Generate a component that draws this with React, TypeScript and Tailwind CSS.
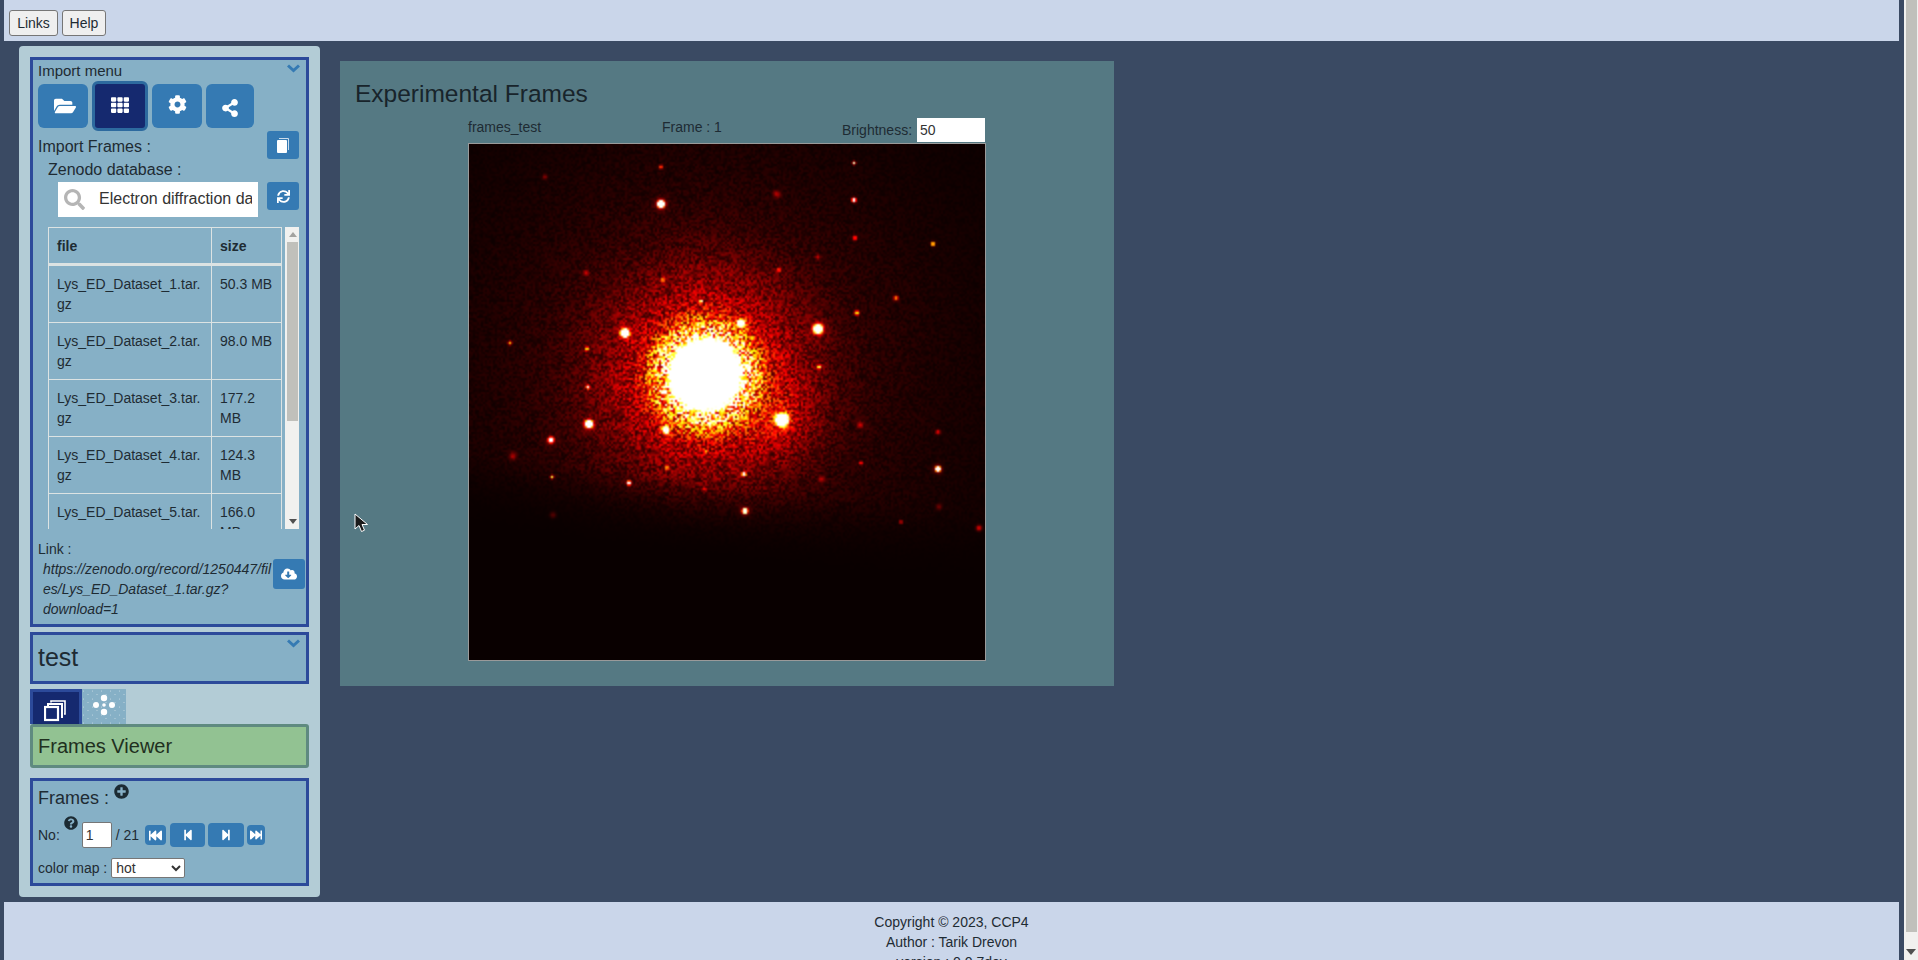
import React, { useEffect, useRef } from "react";
import {
  FaCog,
  FaCloudDownloadAlt,
  FaFastBackward,
  FaFastForward,
  FaFolderOpen,
  FaPlusCircle,
  FaQuestionCircle,
  FaSearch,
  FaShareAlt,
  FaStepBackward,
  FaStepForward,
  FaSync,
  FaTh,
} from "react-icons/fa";

const files = [
  ["Lys_ED_Dataset_1.tar.gz", "50.3 MB"],
  ["Lys_ED_Dataset_2.tar.gz", "98.0 MB"],
  ["Lys_ED_Dataset_3.tar.gz", "177.2 MB"],
  ["Lys_ED_Dataset_4.tar.gz", "124.3 MB"],
  ["Lys_ED_Dataset_5.tar.gz", "166.0 MB"],
];

// x, y, sigma, amplitude (in displayed pixels of the 516 frame)
const spots = [
  [192, 23, 1.2, 0.5], [76, 33, 1.6, 0.16], [385, 19, 1, 0.9], [385, 56, 1.3, 1.4], [192, 60, 2, 3],
  [308, 50, 2.4, 0.2], [386, 94, 1.4, 0.5], [464, 100, 1.2, 1], [349, 113, 1.6, 0.2], [310, 126, 1.6, 0.35],
  [117, 129, 2, 0.2], [194, 136, 1.6, 0.45], [232, 157, 1, 0.9], [427, 154, 1.5, 0.55], [388, 169, 1.5, 0.7],
  [272, 179, 2, 2.2], [349, 185, 2.5, 3.2], [156, 189, 2.3, 3.2], [41, 199, 1.2, 0.55], [118, 205, 1.2, 0.8],
  [350, 223, 1.3, 0.8], [119, 243, 1.1, 1.3], [313, 276, 3.3, 4], [120, 280, 2.1, 3], [197, 286, 2, 2.2],
  [82, 296, 1.5, 2.2], [44, 312, 2.4, 0.2], [469, 288, 1.6, 0.3], [391, 281, 2, 0.25], [236, 308, 1.4, 0.4],
  [198, 324, 1.1, 0.7], [275, 330, 1.3, 1.5], [469, 325, 1.5, 2.4], [392, 319, 1.2, 0.4], [83, 333, 1.1, 0.7],
  [160, 339, 1.3, 1.4], [236, 345, 1.2, 0.3], [353, 335, 2, 0.2], [276, 367, 1.5, 2.4], [510, 384, 1.8, 0.3],
  [432, 378, 1.2, 0.3], [470, 363, 2, 0.12], [84, 371, 2, 0.1],
];

function hotColor(v: number) {
  const clamp = (n: number) => Math.max(0, Math.min(1, n));
  return [clamp(v * 3) * 255, clamp(v * 3 - 1) * 255, clamp(v * 3 - 2) * 255];
}

function DiffractionFrame() {
  const canvasRef = useRef<HTMLCanvasElement | null>(null);

  useEffect(() => {
    const ctx = canvasRef.current?.getContext("2d");
    if (!ctx) return;
    const size = 258;
    const img = ctx.createImageData(size, size);
    let seed = 20231;
    const rand = () => {
      seed = (seed + 0x6d2b79f5) | 0;
      let t = Math.imul(seed ^ (seed >>> 15), 1 | seed);
      t = (t + Math.imul(t ^ (t >>> 7), 61 | t)) ^ t;
      return ((t ^ (t >>> 14)) >>> 0) / 4294967296;
    };
    for (let j = 0; j < size; j++) {
      for (let i = 0; i < size; i++) {
        const x = i * 2 + 1;
        const y = j * 2 + 1;
        const d = Math.hypot(x - 236, y - 231);
        let v = 0.065 * Math.exp(-Math.pow(d / 230, 2)) + 0.27 * Math.exp(-Math.pow(d / 96, 2.4));
        v += 0.5 * Math.exp(-Math.pow(d / 56, 6));
        v += 0.09 * Math.exp(-(Math.pow(x - 310, 2) + Math.pow(y - 275, 2)) / 1500);
        // beam stop shadow at the bottom of the frame
        const edge = 350 + x * 0.12;
        const mask = Math.max(0, Math.min(1, (edge - y) / 80 + 0.5));
        v *= mask * mask;
        v = v * (0.3 + 1.4 * rand()) + 0.012;
        if (d < 32) v = 1.2;
        else if (d < 40) v += (0.9 * (40 - d)) / 8;
        for (const [sx, sy, s, a] of spots) {
          const dd = (x - sx) * (x - sx) + (y - sy) * (y - sy);
          if (dd < 400) {
            v += a * Math.exp(-dd / (2 * s * s));
            if (a > 1.8) v += 0.08 * Math.exp(-dd / (2 * s * s * 6));
          }
        }
        const [cr, cg, cb] = hotColor(v);
        const k = (j * size + i) * 4;
        img.data[k] = cr;
        img.data[k + 1] = cg;
        img.data[k + 2] = cb;
        img.data[k + 3] = 255;
      }
    }
    ctx.putImageData(img, 0, 0);
  }, []);

  return <canvas ref={canvasRef} width={258} height={258} className="block w-[516px] h-[516px]" />;
}

function Chevron() {
  return (
    <svg className="absolute right-[6px] top-[4px]" width="13" height="9" viewBox="0 0 13 9" fill="none" stroke="#357ab3" strokeWidth="3">
      <path d="M1 1.500l5.500 5 5.500-5" />
    </svg>
  );
}

function MenuButton({ active, className, children }: { active?: boolean; className: string; children: React.ReactNode }) {
  return (
    <button
      className={
        active
          ? `flex items-center justify-center rounded-[6px] bg-[#15296f] text-white h-[50px] border-[3px] border-[#2d6a9f] ${className}`
          : `flex items-center justify-center rounded-[6px] bg-[#357ab3] text-white h-[44px] ${className}`
      }
    >
      {children}
    </button>
  );
}

function SmallButton({ className, children }: { className: string; children: React.ReactNode }) {
  return (
    <button className={`flex items-center justify-center rounded-[3px] bg-[#357ab3] text-white ${className}`}>
      {children}
    </button>
  );
}

function StackIcon() {
  return (
    <svg width="22" height="22" viewBox="0 0 22 22" fill="none" stroke="white" strokeWidth="2">
      <rect x="1" y="7" width="13" height="13" strokeWidth="2.2" />
      <path d="M4 6V4h14v13h-1" />
      <path d="M7 2.5V1h14v13h-1" strokeWidth="1.6" />
    </svg>
  );
}

function GraphTabIcon() {
  return (
    <svg width="44" height="35" viewBox="0 0 44 35">
      <defs>
        <pattern id="speckle" width="9" height="8" patternUnits="userSpaceOnUse">
          <circle cx="1.5" cy="2" r="0.5" fill="#cfe0e8" />
          <circle cx="6" cy="5.5" r="0.5" fill="#cfe0e8" />
        </pattern>
      </defs>
      <rect width="44" height="35" fill="url(#speckle)" />
      <g fill="white">
        <circle cx="22" cy="9" r="3.2" />
        <circle cx="22" cy="23" r="3.2" />
        <circle cx="14" cy="16" r="3" />
        <circle cx="30" cy="16" r="3" />
        <circle cx="22" cy="16" r="1.8" />
      </g>
    </svg>
  );
}

export default function App() {
  return (
    <div
      className="relative flex h-[960px] w-[1918px] overflow-hidden bg-[#3a4a63] text-[#1e2b33] text-[14px] leading-[20px]"
      style={{ fontFamily: '"Liberation Sans", Arial, sans-serif' }}
    >
      <div className="flex flex-col w-[1904px] pl-[4px] pr-[5px]">
        <header className="flex h-[41px] shrink-0 items-start gap-[4px] bg-[#cad6ea] pl-[5px] pt-[10px]">
          <button className="h-[26px] w-[49px] rounded-[3px] border border-[#767676] bg-[#efefef]">Links</button>
          <button className="h-[26px] w-[44px] rounded-[3px] border border-[#767676] bg-[#efefef]">Help</button>
        </header>

        <div className="flex h-[861px] shrink-0 items-start">
          <aside className="ml-[15px] mt-[5px] h-[851px] w-[301px] rounded-[4px] bg-[#b3ccd6] px-[11px] pt-[11px]">
            <section className="relative h-[570px] border-[3px] border-[#2c4a9a] bg-[#86b0c6] pl-[5px]">
              <Chevron />
              <div className="text-[15px] leading-[22px]">Import menu</div>
              <div className="-mt-[1px] flex items-center h-[50px]">
                <MenuButton className="w-[50px] text-[22px]"><FaFolderOpen className="ml-[4px] -mt-[1px]" /></MenuButton>
                <MenuButton active className="ml-[4px] w-[56px] text-[18px]"><FaTh className="-mt-[2px]" /></MenuButton>
                <MenuButton className="ml-[4px] w-[50px] text-[19px]"><FaCog className="-mt-[3px]" /></MenuButton>
                <MenuButton className="ml-[4px] w-[48px] text-[18px]"><FaShareAlt className="mt-[3px]" /></MenuButton>
              </div>
              <div className="flex h-[28px] items-center">
                <span className="text-[16px] mt-[4px]">Import Frames :</span>
                <SmallButton className="ml-[116px] h-[28px] w-[32px]">
                  <svg width="12" height="15" viewBox="0 0 12 15" fill="white">
                    <path d="M2 0h9a1 1 0 0 1 1 1v11h-1V1H2z" opacity="0.75" />
                    <path d="M1 2h8a1 1 0 0 1 1 1v11a1 1 0 0 1-1 1H1a1 1 0 0 1-1-1V3a1 1 0 0 1 1-1z" />
                  </svg>
                </SmallButton>
              </div>
              <div className="pl-[10px] text-[16px] leading-[22px]">Zenodo database :</div>
              <div className="mt-[1px] flex items-start pl-[20px]">
                <div className="flex h-[35px] w-[200px] items-center overflow-hidden bg-white">
                  <FaSearch className="ml-[6px] shrink-0 text-[21px] text-[#b5b5b5]" />
                  <input
                    readOnly
                    value="Electron diffraction dataset"
                    className="ml-[14px] mr-[6px] mb-[2px] min-w-0 flex-1 bg-transparent text-[16px] text-[#333333] outline-none"
                  />
                </div>
                <div className="ml-[9px] h-[35px] shrink-0 bg-[#86b0c6] relative z-10">
                  <SmallButton className="h-[28px] w-[32px]"><FaSync className="text-[13px]" /></SmallButton>
                </div>
              </div>
              <div className="ml-[10px] mt-[10px] flex h-[302px] w-[251px] overflow-hidden">
                <table className="h-fit w-[233px] table-fixed border-collapse text-left">
                  <colgroup>
                    <col className="w-[163px]" />
                    <col className="w-[70px]" />
                  </colgroup>
                  <thead>
                    <tr className="h-[37px]">
                      <th className="border border-b-[3px] border-[#dce3e3] px-[8px] font-bold">file</th>
                      <th className="border border-b-[3px] border-[#dce3e3] px-[8px] font-bold">size</th>
                    </tr>
                  </thead>
                  <tbody>
                    {files.map((f) => (
                      <tr key={f[0]}>
                        <td className="h-[57px] border border-[#dce3e3] p-[8px] align-top break-words">{f[0]}</td>
                        <td className="h-[57px] border border-[#dce3e3] p-[8px] align-top break-words">{f[1]}</td>
                      </tr>
                    ))}
                  </tbody>
                </table>
                <div className="ml-[3px] flex h-[302px] w-[15px] shrink-0 flex-col items-center bg-[#f1f1ef]">
                  <div className="mt-[5px] h-0 w-0 border-x-[4px] border-b-[5px] border-x-transparent border-b-[#a3a3a0]" />
                  <div className="mt-[5px] h-[179px] w-[11px] bg-[#c0c0bb]" />
                  <div className="mt-auto mb-[5px] h-0 w-0 border-x-[4px] border-t-[5px] border-x-transparent border-t-[#505050]" />
                </div>
              </div>
              <div className="mt-[10px]">Link :</div>
              <div className="flex items-start">
                <div className="ml-[5px] w-[230px] break-words italic">
                  https://zenodo.org/record/1250447/files/Lys_ED_Dataset_1.tar.gz?download=1
                </div>
                <SmallButton className="h-[30px] w-[32px] shrink-0"><FaCloudDownloadAlt className="text-[16px]" /></SmallButton>
              </div>
            </section>

            <section className="relative mt-[5px] h-[52px] border-[3px] border-[#2c4a9a] bg-[#86b0c6] pl-[5px] text-[25px] leading-[44px]">
              <Chevron />
              test
            </section>

            <div className="mt-[5px] flex h-[35px]">
              <div className="flex w-[52px] items-center justify-center border-[3px] border-b-0 border-[#2c4a9a] bg-[#15296f] pt-[6px] pr-[2px]">
                <StackIcon />
              </div>
              <div className="w-[44px] bg-[#86b0c6]"><GraphTabIcon /></div>
            </div>
            <div className="h-[44px] rounded-[3px] border-[3px] border-[#5f8a80] bg-[#92c292] pl-[5px] text-[20px] leading-[38px] text-[#1f3020]">
              Frames Viewer
            </div>

            <section className="mt-[10px] h-[108px] border-[3px] border-[#2c4a9a] bg-[#86b0c6] pl-[5px]">
              <div className="flex h-[32px] items-center">
                <span className="text-[18px] mt-[2px]">Frames :</span>
                <FaPlusCircle className="ml-[5px] -mt-[12px] text-[15px] text-[#1c2b33]" />
              </div>
              <div className="mt-[9px] flex h-[26px] items-center">
                <span>No:</span>
                <FaQuestionCircle className="ml-[4px] -mt-[24px] text-[14px] text-[#1c2b33]" />
                <input
                  readOnly
                  value="1"
                  className="ml-[4px] h-[26px] w-[30px] rounded-[2px] border border-[#767676] bg-white pl-[3px] text-[14px] text-[#333333]"
                />
                <span className="ml-[4px]">/ 21</span>
                <SmallButton className="ml-[6px] h-[20px] w-[21px] rounded-[4px]"><FaFastBackward className="text-[13px]" /></SmallButton>
                <SmallButton className="ml-[4px] h-[24px] w-[35px] rounded-[4px]"><FaStepBackward className="text-[12px]" /></SmallButton>
                <SmallButton className="ml-[3px] h-[24px] w-[36px] rounded-[4px]"><FaStepForward className="text-[12px]" /></SmallButton>
                <SmallButton className="ml-[3px] h-[20px] w-[18px] rounded-[4px]"><FaFastForward className="text-[12px]" /></SmallButton>
              </div>
              <div className="mt-[10px] flex h-[20px] items-center">
                <span>color map :</span>
                <select defaultValue="hot" className="ml-[4px] h-[20px] w-[74px] rounded-[2px] border border-[#767676] bg-white text-[14px] text-[#333333]">
                  <option value="hot">hot</option>
                  <option value="jet">jet</option>
                  <option value="gray">gray</option>
                </select>
              </div>
            </section>
          </aside>

          <main className="ml-[20px] mt-[20px] h-[625px] w-[774px] bg-[#557983]">
            <h1 className="pl-[15px] pt-[19px] text-[24.5px] leading-[28px] text-[#18242b]">Experimental Frames</h1>
            <div className="mt-[10px] ml-[128px] flex h-[25px] w-[518px]">
              <span className="w-[194px] -mt-[1px]">frames_test</span>
              <span className="w-[180px] -mt-[1px]">Frame : 1</span>
              <span className="mt-[2px] w-[75px]">Brightness:</span>
              <input readOnly value="50" className="h-[24px] w-[68px] bg-white pl-[3px] text-[14px] text-[#333333]" />
            </div>
            <div className="ml-[128px] w-[518px] border border-[#9a9a9a]">
              <DiffractionFrame />
            </div>
          </main>
        </div>

        <footer className="h-[58px] shrink-0 overflow-hidden bg-[#cad6ea] pt-[10px] text-center">
          <div>Copyright © 2023, CCP4</div>
          <div>Author : Tarik Drevon</div>
          <div>version : 0.0.7dev</div>
        </footer>
      </div>

      <div className="flex h-[960px] w-[14px] flex-col items-center bg-[#f1f1ef]">
        <div className="h-[932px] w-[11px] bg-[#c0c0bb]" />
        <div className="mt-auto mb-[5px] h-0 w-0 border-x-[5px] border-t-[6px] border-x-transparent border-t-[#505050]" />
      </div>

      {/* mouse pointer caught in the screenshot */}
      <svg className="absolute left-[354px] top-[513px]" width="16" height="22" viewBox="0 0 16 22">
        <path d="M1 1v15l4-3.500 2.500 6 3-1.300-2.500-5.700h5.500z" fill="#1a1a1a" stroke="white" strokeWidth="1" />
      </svg>
    </div>
  );
}
